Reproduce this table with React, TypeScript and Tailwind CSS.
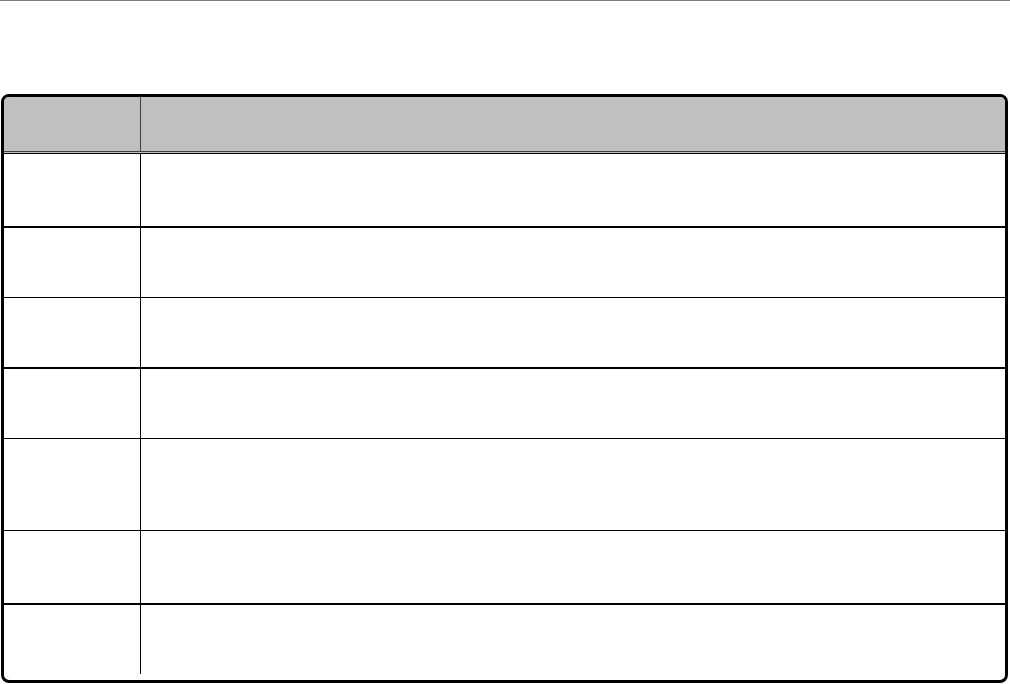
const rows = [
  { h: 'h-[72px]', line: 'border-b-2' },
  { h: 'h-[69px]', line: 'border-b' },
  { h: 'h-[69px]', line: 'border-b-2' },
  { h: 'h-[69px]', line: 'border-b' },
  { h: 'h-[91px]', line: 'border-b' },
  { h: 'h-[72px]', line: 'border-b-2' },
];

export default function App() {
  return (
    <div className="w-[1010px] h-[684px] bg-white overflow-hidden font-['Liberation_Sans',sans-serif]">
      {/* top rule */}
      <div className="h-px w-full bg-[#808080]" />

      {/* table */}
      <div className="ml-px mt-[93px] w-[1007px] h-[589px] border-[3px] border-black rounded-[8px] overflow-hidden flex flex-col">
        {/* header */}
        <div className="flex h-[54px] bg-[#c0c0c0] shrink-0">
          <div className="w-[137px] border-r border-[#404040]" />
          <div className="flex-1" />
        </div>
        <div className="h-px bg-[#404040] shrink-0" />
        <div className="h-px bg-[#c0c0c0] shrink-0" />
        <div className="h-px bg-black shrink-0" />

        {/* body rows */}
        {rows.map((r, i) => (
          <div key={i} className={`flex shrink-0 border-black ${r.h} ${r.line} box-content`}>
            <div className="w-[137px] border-r border-black" />
            <div className="flex-1" />
          </div>
        ))}
        <div className="flex h-[75px] shrink-0">
          <div className="w-[137px] h-[69px] border-r border-black" />
          <div className="flex-1" />
        </div>
      </div>
    </div>
  );
}
